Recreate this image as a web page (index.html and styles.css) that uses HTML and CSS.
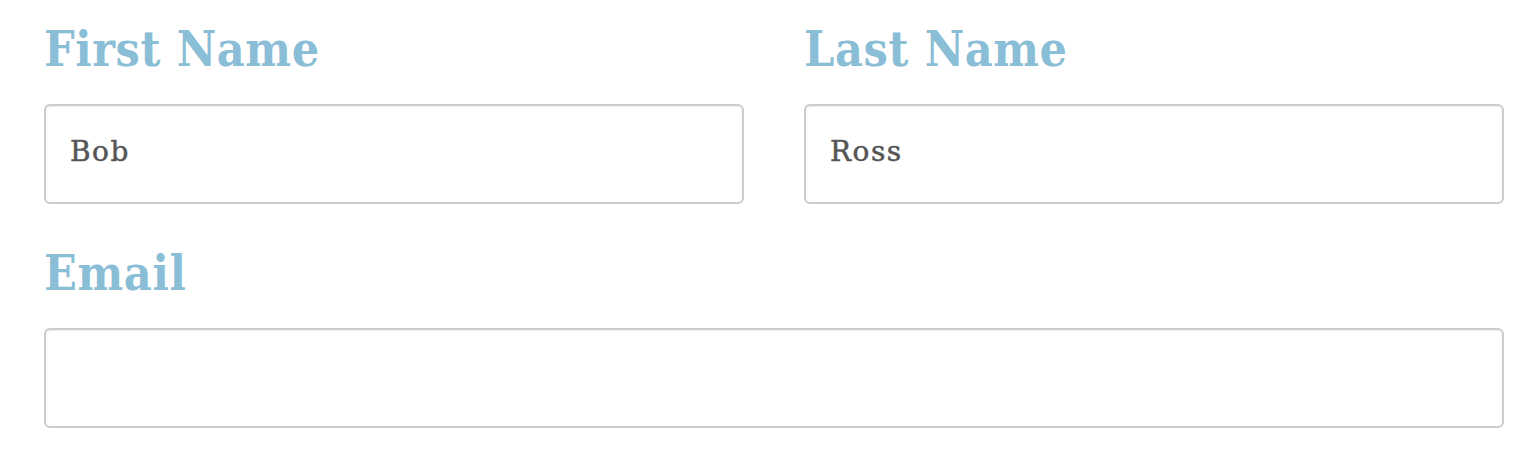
FILE: index.html
```html
<!DOCTYPE html>
<html>
<head>
<meta charset="utf-8">
<link rel="stylesheet" href="styles.css">
</head>
<body>
<form class="form">
  <div class="row two">
    <div class="field">
      <label class="label">First Name</label>
      <input class="input" type="text" value="Bob">
    </div>
    <div class="field">
      <label class="label">Last Name</label>
      <input class="input" type="text" value="Ross">
    </div>
  </div>
  <div class="row">
    <div class="field">
      <label class="label">Email</label>
      <input class="input" type="text" value="">
    </div>
  </div>
</form>
</body>
</html>
```
FILE: styles.css
```css
html, body {
  margin: 0;
  padding: 0;
  background: #fff;
}
.form {
  width: 1460px;
  padding: 21px 0 0 44px;
  display: flex;
  flex-direction: column;
  gap: 41px;
}
.row {
  display: grid;
  grid-template-columns: 1fr;
}
.row.two {
  grid-template-columns: 700px 700px;
  column-gap: 60px;
}
.field {
  display: flex;
  flex-direction: column;
  gap: 27px;
}
.label {
  font-family: "DejaVu Serif Condensed", "DejaVu Serif", serif;
  font-weight: bold;
  font-size: 48px;
  line-height: 56px;
  letter-spacing: 0.6px;
  color: #8abdd6;
}
.input {
  box-sizing: border-box;
  height: 100px;
  width: 100%;
  border: 2px solid #cccccc;
  border-radius: 6px;
  box-shadow: inset 0 1px 2px rgba(0,0,0,0.08);
  padding: 0 24px 6px;
  font-family: "DejaVu Serif", serif;
  font-size: 28px;
  letter-spacing: 1.5px;
  -webkit-text-stroke: 0.5px #555;
  color: #555;
  background: #fff;
  outline: none;
}
```
